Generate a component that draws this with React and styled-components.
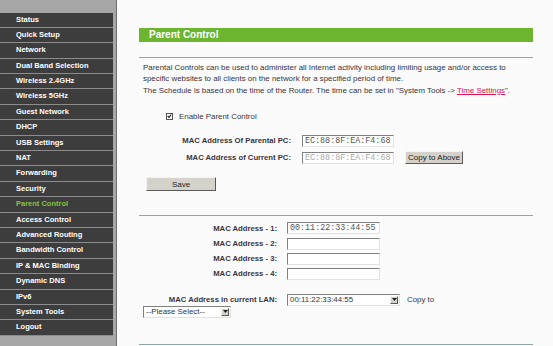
import React from "react";
import styled, { createGlobalStyle } from "styled-components";

const Global = createGlobalStyle`
  html, body { margin: 0; padding: 0; background: #fbfbfb; }
  body { font-family: "Liberation Sans", Arial, sans-serif; overflow: hidden; }
  * { box-sizing: border-box; }
`;

const Page = styled.div`
  display: flex;
  width: 553px;
  height: 346px;
  overflow: hidden;
`;

const Sidebar = styled.nav`
  width: 117px;
  flex: none;
  background: #a6a6a6;
  border-right: 1px solid #6f6f6f;
  padding-top: 12.5px;
`;

const MenuItem = styled.div`
  width: 113px;
  height: 15.4px;
  background: #3d3d3d;
  border-bottom: 1px solid #8c8c8c;
  color: ${(p) => (p.$active ? "#86c440" : "#ffffff")};
  font-weight: bold;
  font-size: 7.5px;
  line-height: 14.4px;
  padding-left: 16px;
  white-space: nowrap;
`;

const Main = styled.main`
  flex: 1;
  padding: 28px 20px 0 22px;
  color: #3a3440;
`;

const TitleBar = styled.div`
  height: 14px;
  background: #6bb52f;
  color: #fff;
  font-weight: bold;
  font-size: 10px;
  line-height: 14px;
  padding-left: 10px;
`;

const Rule = styled.div`
  height: 1px;
  background: #8ea9a2;
  margin-top: ${(p) => p.$top}px;
`;

const Para = styled.p`
  margin: ${(p) => p.$top}px 0 0 4px;
  padding-right: 8px;
  font-size: 7.9px;
  line-height: 10.7px;
`;

const Link = styled.a`
  color: #e2104f;
  text-decoration: underline;
`;

const CheckRow = styled.label`
  display: flex;
  align-items: center;
  gap: 6px;
  margin: 15px 0 0 27px;
  font-size: 7.9px;
  height: 10px;
`;

const Box = styled.span`
  width: 7px;
  height: 7px;
  border: 1px solid #555;
  background: #fff;
  display: flex;
  align-items: center;
  justify-content: center;
`;

const FormGrid = styled.div`
  display: grid;
  grid-template-columns: ${(p) => p.$label}px auto auto;
  column-gap: ${(p) => p.$gap}px;
  row-gap: ${(p) => p.$row}px;
  align-items: center;
  justify-content: start;
  margin-top: ${(p) => p.$top}px;
`;

const Label = styled.span`
  text-align: right;
  font-weight: bold;
  font-size: 7.7px;
  white-space: nowrap;
`;

const TextBox = styled.input`
  width: ${(p) => p.$w || 92}px;
  height: 12px;
  padding: 0 0 0 2px;
  margin: 0;
  border: 1px solid;
  border-color: #808080 #e2e2e2 #e2e2e2 #808080;
  background: #fff;
  font-family: "Liberation Mono", "Courier New", monospace;
  font-size: 8.4px;
  color: ${(p) => (p.disabled ? "#a8a8a8" : "#555")};
  outline: none;
`;

const Button = styled.button`
  width: ${(p) => p.$w}px;
  height: ${(p) => p.$h}px;
  margin: 0;
  padding: 0;
  background: #d5d2cc;
  border: 1px solid;
  border-color: #f4f4f4 #5a5a5a #5a5a5a #f4f4f4;
  font-family: "Liberation Sans", Arial, sans-serif;
  font-size: 8px;
  color: #222;
`;

const SaveWrap = styled.div`
  margin: 8.5px 0 0 7px;
`;

const Select = styled.div`
  display: flex;
  align-items: center;
  width: ${(p) => p.$w}px;
  height: 12px;
  background: #fff;
  border: 1px solid;
  border-color: #808080 #e2e2e2 #e2e2e2 #808080;
  font-size: 7.9px;
  color: #3a3440;
  padding-left: 2px;
`;

const SelectText = styled.span`
  flex: 1;
  white-space: nowrap;
`;

const Arrow = styled.span`
  width: 8px;
  height: 8px;
  margin-right: 1px;
  background: #d5d2cc;
  border: 1px solid;
  border-color: #f4f4f4 #5a5a5a #5a5a5a #f4f4f4;
  display: flex;
  align-items: center;
  justify-content: center;
`;

const Inline = styled.div`
  display: flex;
  align-items: center;
  gap: 7px;
  font-size: 7.9px;
`;

const LooseSelect = styled.div`
  margin: 0 0 0 4px;
`;

const ArrowIcon = () => (
  <svg width="5" height="3" viewBox="0 0 5 3">
    <path d="M0 0H5L2.5 3Z" fill="#222" />
  </svg>
);

const menu = [
  "Status",
  "Quick Setup",
  "Network",
  "Dual Band Selection",
  "Wireless 2.4GHz",
  "Wireless 5GHz",
  "Guest Network",
  "DHCP",
  "USB Settings",
  "NAT",
  "Forwarding",
  "Security",
  "Parent Control",
  "Access Control",
  "Advanced Routing",
  "Bandwidth Control",
  "IP & MAC Binding",
  "Dynamic DNS",
  "IPv6",
  "System Tools",
  "Logout",
];

export default function App() {
  return (
    <>
      <Global />
      <Page>
        <Sidebar>
          {menu.map((m) => (
            <MenuItem key={m} $active={m === "Parent Control"}>
              {m}
            </MenuItem>
          ))}
        </Sidebar>
        <Main>
          <TitleBar>Parent Control</TitleBar>
          <Rule $top={15} />
          <Para $top={5}>
            Parental Controls can be used to administer all Internet activity including limiting usage and/or access to
            specific websites to all clients on the network for a specified period of time.
          </Para>
          <Para $top={1.3}>
            The Schedule is based on the time of the Router. The time can be set in "System Tools -&gt;{" "}
            <Link>Time Settings</Link>".
          </Para>
          <CheckRow>
            <Box>
              <svg width="6" height="6" viewBox="0 0 6 6">
                <path d="M0.8 3L2.4 4.6L5.2 1.2" stroke="#222" strokeWidth="1.3" fill="none" />
              </svg>
            </Box>
            Enable Parent Control
          </CheckRow>
          <FormGrid $label={152} $gap={11} $row={4.5} $top={13.5}>
            <Label>MAC Address Of Parental PC:</Label>
            <TextBox readOnly value="EC:88:8F:EA:F4:68" />
            <span />
            <Label>MAC Address of Current PC:</Label>
            <TextBox disabled value="EC:88:8F:EA:F4:68" />
            <Button $w={58} $h={13}>Copy to Above</Button>
          </FormGrid>
          <SaveWrap>
            <Button $w={70} $h={14}>Save</Button>
          </SaveWrap>
          <Rule $top={24} />
          <FormGrid $label={138} $gap={10} $row={3.2} $top={6}>
            <Label>MAC Address - 1:</Label>
            <TextBox readOnly value="00:11:22:33:44:55" $w={93} />
            <span />
            <Label>MAC Address - 2:</Label>
            <TextBox readOnly value="" $w={93} />
            <span />
            <Label>MAC Address - 3:</Label>
            <TextBox readOnly value="" $w={93} />
            <span />
            <Label>MAC Address - 4:</Label>
            <TextBox readOnly value="" $w={93} />
            <span />
          </FormGrid>
          <FormGrid $label={138} $gap={10} $row={0} $top={14}>
            <Label>MAC Address in current LAN:</Label>
            <Inline>
              <Select $w={113}>
                <SelectText>00:11:22:33:44:55</SelectText>
                <Arrow><ArrowIcon /></Arrow>
              </Select>
              Copy to
            </Inline>
            <span />
          </FormGrid>
          <LooseSelect>
            <Select $w={88}>
              <SelectText>--Please Select--</SelectText>
              <Arrow><ArrowIcon /></Arrow>
            </Select>
          </LooseSelect>
          <Rule $top={26} />
        </Main>
      </Page>
    </>
  );
}
